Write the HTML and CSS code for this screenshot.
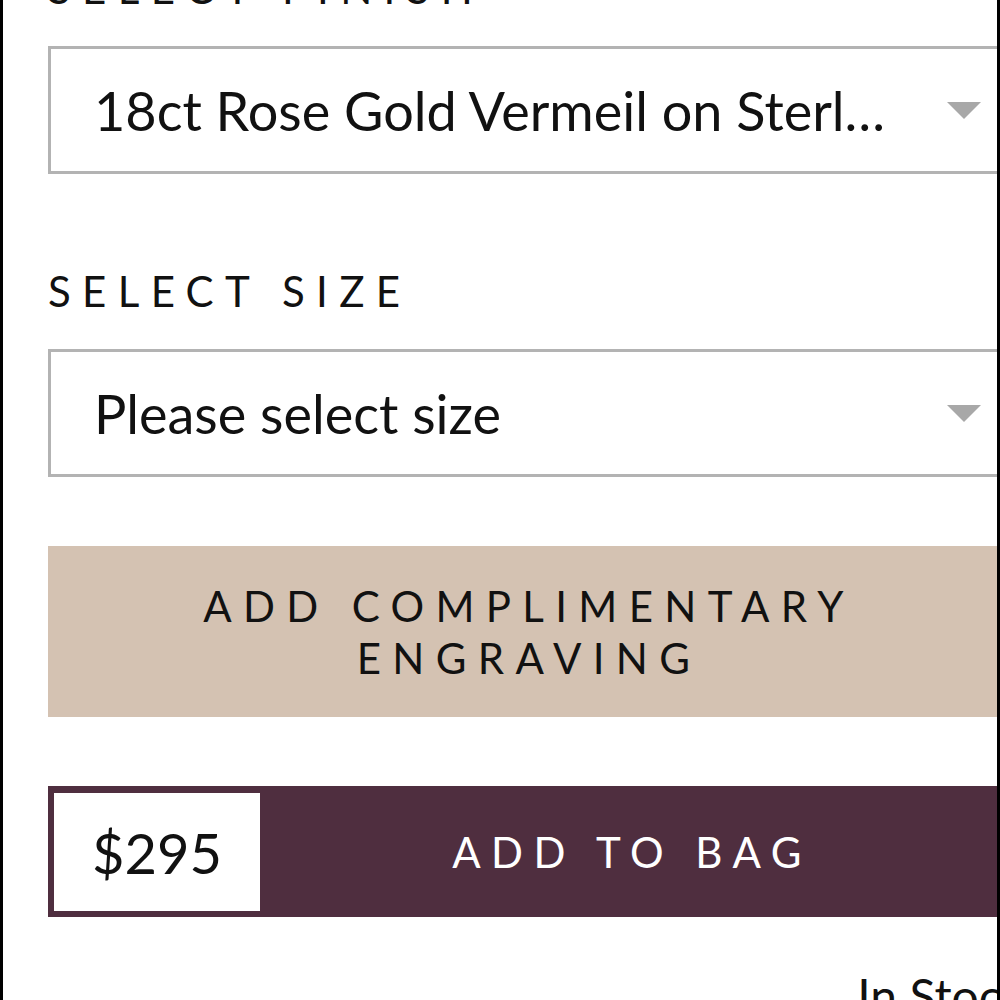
FILE: index.html
```html
<!DOCTYPE html>
<html lang="en">
  <head>
    <meta charset="UTF-8" />
    <meta name="viewport" content="width=device-width, initial-scale=1.0" />
    <title>Product options</title>
    <link rel="stylesheet" href="styles.css">
  </head>
  <body>
    <div class="page">
      <div class="content">
        <!-- finish -->
        <div class="label">Select Finish</div>
        <div class="select">
          <div class="value">18ct Rose Gold Vermeil on Sterling Silver</div>
          <div class="arrow"></div>
        </div>
        <!-- size -->
        <div class="label">Select Size</div>
        <div class="select last">
          <div class="value">Please select size</div>
          <div class="arrow"></div>
        </div>
        <div class="engrave">Add complimentary<br />engraving</div>
        <div class="buy">
          <div class="price">$295</div>
          <div class="bag">Add to bag</div>
        </div>
        <div class="stock">In Stock</div>
      </div>
    </div>
  </body>
</html>
```

FILE: styles.css
```css
body {
  margin: 0;
  font-family: Lato, "Noto Sans", sans-serif;
  color: #111;
  background: #fff;
}
.page {
  width: 1000px;
  height: 1000px;
  box-sizing: border-box;
  border-left: 3px solid #000;
  border-right: 3px solid #000;
  overflow: hidden;
}
.content {
  width: 962px;
  padding-left: 45px;
  margin-top: -37px;
}
.label {
  font-size: 42px;
  line-height: 50px;
  letter-spacing: 0.27em;
  text-transform: uppercase;
  margin-bottom: 33px;
}
.select {
  display: flex;
  align-items: center;
  height: 128px;
  box-sizing: border-box;
  border: 3px solid #b3b3b3;
  padding: 0 26px 0 43px;
  margin-bottom: 92px;
}
.select.last {
  margin-bottom: 69px;
}
.value {
  flex: 1;
  font-size: 54px;
  white-space: nowrap;
  overflow: hidden;
  text-overflow: ellipsis;
  padding-right: 61px;
}
.arrow {
  width: 0;
  height: 0;
  border-left: 17px solid transparent;
  border-right: 17px solid transparent;
  border-top: 17px solid #a8a8a8;
}
.engrave {
  height: 171px;
  background-color: #d4c2b2;
  display: flex;
  flex-direction: column;
  justify-content: center;
  text-align: center;
  font-size: 42px;
  line-height: 52px;
  letter-spacing: 0.27em;
  text-transform: uppercase;
  margin-bottom: 69px;
}
.buy {
  display: flex;
  height: 131px;
  box-sizing: border-box;
  border: 6px solid #4f2e3f;
  background-color: #4f2e3f;
}
.price {
  width: 206px;
  background: #fff;
  display: flex;
  align-items: center;
  justify-content: center;
  font-size: 56px;
  margin-top: 1px;
}
.bag {
  flex: 1;
  display: flex;
  align-items: center;
  justify-content: center;
  color: #fff;
  font-size: 42px;
  letter-spacing: 0.25em;
  text-transform: uppercase;
}
.stock {
  text-align: right;
  font-size: 48px;
  margin-top: 50px;
  margin-right: -16px;
}
```
